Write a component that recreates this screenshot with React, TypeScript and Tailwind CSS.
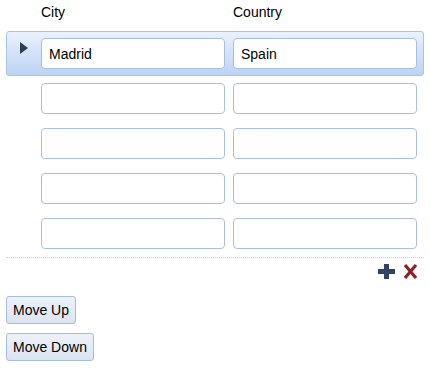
import React from 'react';

const rows = [
  { city: 'Madrid', country: 'Spain' },
  { city: '', country: '' },
  { city: '', country: '' },
  { city: '', country: '' },
  { city: '', country: '' },
];

const inputCls =
  'h-[31px] w-[184px] rounded-[4px] border border-[#a9bfdf] bg-white px-[7px] text-[14px] text-black outline-none';

const App = () => {
  return (
    <div className="h-[372px] w-[430px] bg-white text-[14px] text-black" style={{ fontFamily: '"Liberation Sans", Arial, sans-serif' }}>
      <div className="w-[424px] pl-[6px]">
        <div className="flex h-[31px] items-start pt-[2px]">
          <div className="w-[35px]" />
          <div className="w-[192px]">City</div>
          <div>Country</div>
        </div>
        {rows.map((r, i) => (
          <div
            key={i}
            className={
              i === 0
                ? 'flex h-[45px] items-start rounded-[3px] border border-[#a8c2ea] bg-gradient-to-b from-[#eaf1fc] to-[#bcd3f5] pt-[6px]'
                : 'flex h-[45px] items-start border border-transparent pt-[6px]'
            }
          >
            <div className="flex w-[34px] justify-center pt-[4px]">
              {i === 0 && (
                <svg width="8" height="12" viewBox="0 0 8 12">
                  <path d="M0 0 L8 6 L0 12 Z" fill="#2d3d52" />
                </svg>
              )}
            </div>
            <div className="flex gap-[8px]">
              <input className={inputCls} defaultValue={r.city} />
              <input className={inputCls} defaultValue={r.country} />
            </div>
          </div>
        ))}
        <div className="mt-[1px] border-t border-dotted border-[#bcd1ee]" />
        <div className="flex justify-end gap-[8px] pr-[6px] pt-[6px]">
          <svg width="17" height="15" viewBox="0 0 17 15">
            <path d="M6 0 H11 V5 H17 V10 H11 V15 H6 V10 H0 V5 H6 Z" fill="#2e4566" />
          </svg>
          <svg width="15" height="15" viewBox="0 0 15 15">
            <path d="M2 1 L13 14 M13 1 L2 14" stroke="#8b2323" strokeWidth="3.2" />
          </svg>
        </div>
      </div>
      <div className="flex flex-col items-start gap-[9px] pl-[6px] pt-[17px]">
        <button className="h-[28px] rounded-[3px] border border-[#a6bddc] bg-gradient-to-b from-[#edf2f9] to-[#dbe4f1] px-[6px] text-[14px] text-black">
          Move Up
        </button>
        <button className="h-[28px] rounded-[3px] border border-[#a6bddc] bg-gradient-to-b from-[#edf2f9] to-[#dbe4f1] px-[6px] text-[14px] text-black">
          Move Down
        </button>
      </div>
    </div>
  );
};

export default App;
